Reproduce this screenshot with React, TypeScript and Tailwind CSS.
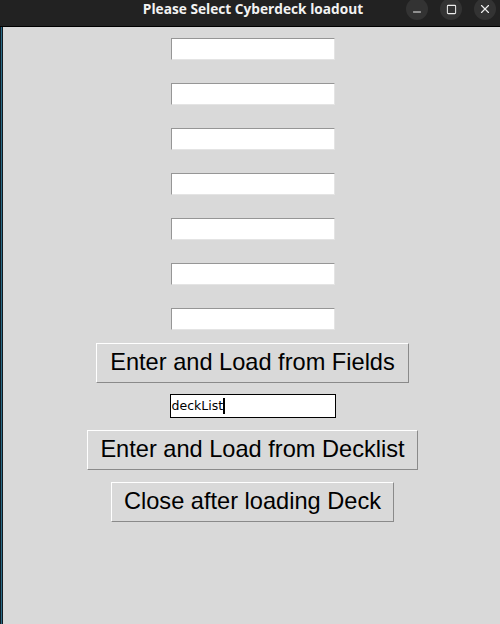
import { Minus, Square, X } from 'lucide-react';

const fields = [0, 1, 2, 3, 4, 5, 6];

function TkButton({ label, width }: { label: string; width: string }) {
  return (
    <button
      type="button"
      className={`${width} h-[40px] bg-[#d9d9d9] border border-t-white border-l-white border-b-[#8a8a8a] border-r-[#8a8a8a] text-[23.6px] text-black font-['Liberation_Sans',Arial,sans-serif] leading-none`}
    >
      {label}
    </button>
  );
}

export default function App() {
  return (
    <div className="w-[500px] h-[624px] flex flex-col bg-[#d9d9d9] overflow-hidden">
      {/* title bar */}
      <div className="h-[27px] shrink-0 bg-[#222222] border-b border-black relative flex justify-center">
        <span className="text-[13.7px] leading-[17px] font-bold text-[#f2f2f2] font-['Open_Sans',sans-serif] ml-[6px]">
          Please Select Cyberdeck loadout
        </span>
        <div className="absolute right-[4px] top-[-2px] flex gap-[12px]">
          <div className="w-[22px] h-[22px] rounded-full bg-[#333333] flex items-center justify-center">
            <Minus size={12} strokeWidth={2} className="text-[#ededed] mt-[5px]" />
          </div>
          <div className="w-[22px] h-[22px] rounded-full bg-[#333333] flex items-center justify-center">
            <Square size={11} strokeWidth={2.2} className="text-[#ededed]" />
          </div>
          <div className="w-[22px] h-[22px] rounded-full bg-[#333333] flex items-center justify-center">
            <X size={14} strokeWidth={2} className="text-[#ededed]" />
          </div>
        </div>
      </div>

      <div className="flex flex-1">
        {/* left window edge */}
        <div className="w-[3px] shrink-0 flex">
          <div className="w-[1px] bg-[#0f1c24]" />
          <div className="w-[1px] bg-[#2b6c88]" />
          <div className="w-[1px] bg-[#121a20]" />
        </div>

        <div className="flex-1 flex flex-col items-center pl-[2px] pt-[11px]">
          <div className="flex flex-col items-center gap-[23px]">
            {fields.map((i) => (
              <div
                key={i}
                className="w-[164px] h-[22px] bg-white border border-t-[#969696] border-l-[#969696] border-b-[#e4e4e4] border-r-[#e4e4e4]"
              />
            ))}
          </div>

          <div className="mt-[13px] flex flex-col items-center">
            <TkButton label="Enter and Load from Fields" width="w-[313px]" />

            <div className="mt-[11px] w-[166px] h-[24px] bg-white border border-black flex items-center pl-[1px]">
              <span className="text-[12.5px] text-black font-['DejaVu_Sans',sans-serif] leading-none">
                deckList
              </span>
              <span className="w-[2px] h-[16px] bg-black" />
            </div>

            <div className="mt-[12px]">
              <TkButton label="Enter and Load from Decklist" width="w-[331px]" />
            </div>
            <div className="mt-[12px]">
              <TkButton label="Close after loading Deck" width="w-[283px]" />
            </div>
          </div>
        </div>
      </div>
    </div>
  );
}
